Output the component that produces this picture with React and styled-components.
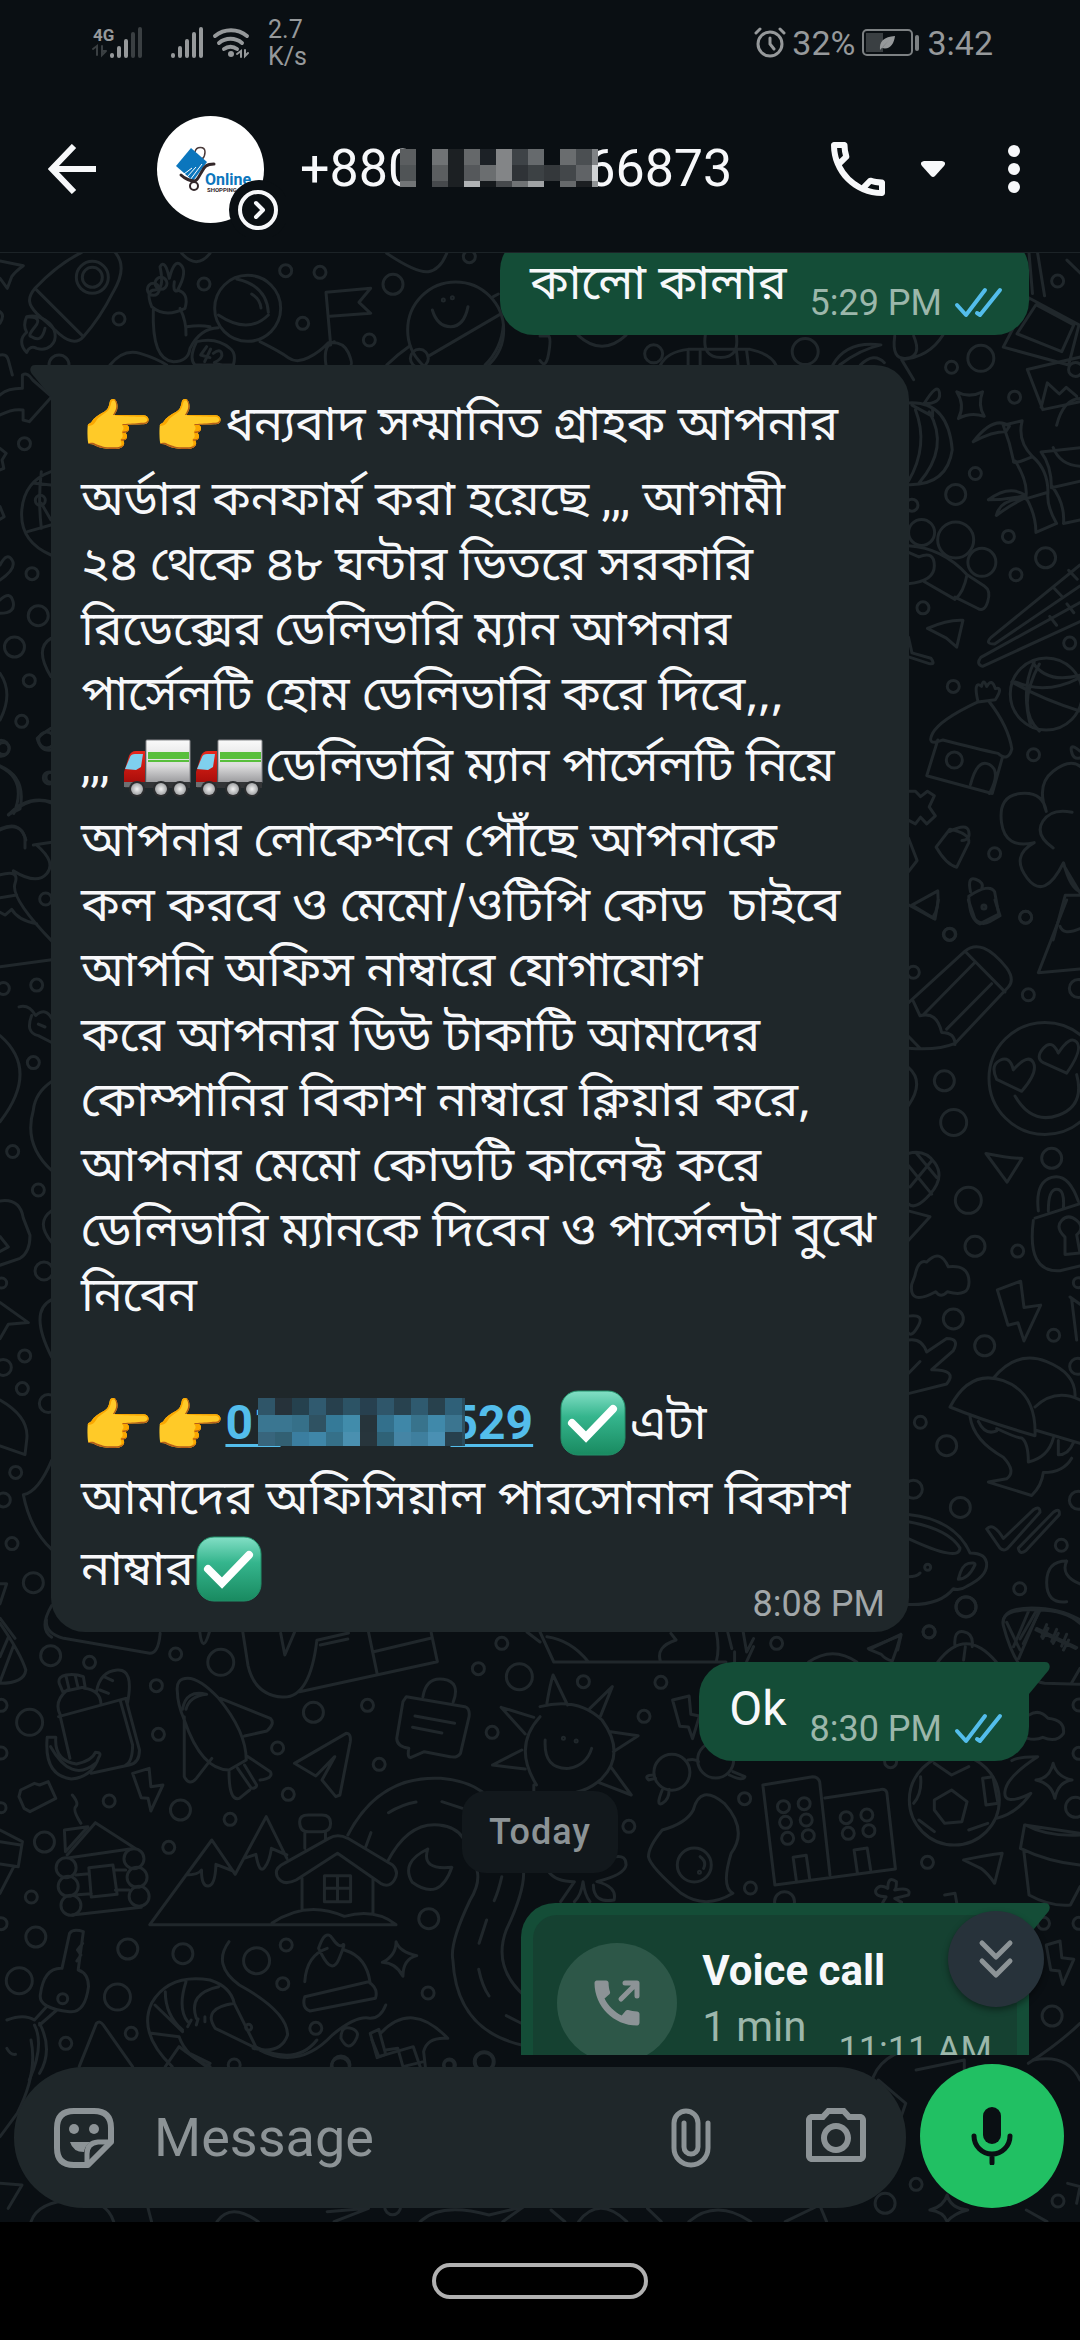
import React from 'react';
import styled, { createGlobalStyle } from 'styled-components';
import { MdOutlineCall, MdCall, MdOutlinePhotoCamera } from 'react-icons/md';

const c = {
  bg: '#0a0f13',
  doodle: '#20272b',
  line: '#1c2327',
  received: '#1f272a',
  sent: '#144d37',
  text: '#f7f8fa',
  muted: '#8c9396',
  status: '#96999b',
};
const bengali = '"Noto Sans Bengali UI", "Noto Sans", sans-serif';

const GlobalStyle = createGlobalStyle`
  * { box-sizing: border-box; }
  body { margin: 0; background: #000; color: ${c.text}; font-family: Roboto, "Noto Sans", sans-serif; }
  button { border: 0; padding: 0; background: none; color: inherit; font: inherit; display: flex; align-items: center; justify-content: center; }
  svg { display: block; flex: none; }
`;

const Screen = styled.div`
  display: flex;
  flex-direction: column;
  height: 100vh;
  background: ${c.bg};
`;

/* ---------- status bar ---------- */
const StatusBar = styled.div`
  display: flex;
  justify-content: space-between;
  align-items: center;
  height: 85px;
  padding: 0 87px 0 92px;
  color: ${c.status};
`;
const StatusGroup = styled.div`
  display: flex;
  align-items: center;
  gap: ${(p) => p.$gap}px;
`;
const NetSpeed = styled.span`
  width: 36px;
  margin-left: 8px;
  font-size: 25px;
  line-height: 27px;
`;
const StatusText = styled.span`
  font-size: 34px;
  line-height: 40px;
`;

const Signals = () => (
  <svg width="160" height="40" viewBox="0 -2 160 40" fill="none" stroke={c.status} strokeWidth="4" strokeLinecap="round">
    <text x="1" y="16" fontSize="17" fontWeight="700" fill={c.status} stroke="none" fontFamily="Roboto, sans-serif">4G</text>
    <g stroke="#3a3f42" strokeWidth="2">
      <path d="M1 24l4-3v9M10 21v9l4-4M14 26h-3" />
    </g>
    <path d="M20 30v1M27 23v8M34 16v15" />
    <path d="M41 9v22M48 4v27" stroke="#3a3f42" />
    <path d="M81 30v1M88 23v8M95 16v15M102 9v22M109 4v27" />
    <path d="M123 11a25 25 0 0 1 32 0M127 18a18 18 0 0 1 23 0M132 24a11 11 0 0 1 13 0" />
    <circle cx="139" cy="29" r="3" fill={c.status} stroke="none" />
    <path d="M145 29l4-3v6M153 25v6l3-3" strokeWidth="2" />
  </svg>
);
const Alarm = () => (
  <svg width="32" height="32" viewBox="0 0 32 32" fill="none" stroke={c.status} strokeWidth="3" strokeLinecap="round">
    <circle cx="16" cy="17" r="12" />
    <path d="M16 11v6l4 5M2 6l4-4M30 6l-4-4" />
  </svg>
);
const Battery = () => (
  <svg width="60" height="30" viewBox="0 0 60 30">
    <rect x="2" y="2" width="49" height="25" rx="4" fill="none" stroke="#7d8183" strokeWidth="2" />
    <rect x="5" y="5" width="17" height="19" fill="#3a3f42" />
    <path d="M19 22c-1-9 4-13 15-14-1 8-5 14-13 12l7-8-9 10z" fill={c.status} />
    <rect x="54" y="7" width="4" height="16" rx="2" fill="#7d8183" />
  </svg>
);

/* ---------- header ---------- */
const Header = styled.header`
  display: flex;
  align-items: center;
  height: 168px;
  padding: 0 60px 0 48px;
  border-bottom: 1px solid ${c.line};
`;
const AvatarBox = styled.div`
  position: relative;
  margin: 2px 36px 0 61px;
`;
const AvatarBadge = styled.div`
  position: absolute;
  right: -22px;
  bottom: -14px;
`;
const Name = styled.h1`
  flex: 1;
  margin: 0;
  font-size: 52px;
  line-height: 64px;
  font-weight: 400;
  white-space: nowrap;
`;
const CallButton = styled.button`
  gap: 27px;
`;
const MoreButton = styled.button`
  margin-left: 63px;
`;

const Avatar = () => (
  <svg width="107" height="107" viewBox="0 0 107 107" role="img" aria-label="Online Shopping">
    <defs><clipPath id="face"><circle cx="53.500" cy="53.500" r="53.500" /></clipPath></defs>
    <g clipPath="url(#face)">
      <rect width="107" height="107" fill="#fff" />
      <path d="M38 36c1-6 10-6 10 0s-2 6-4 8" fill="none" stroke="#4a3a3a" strokeWidth="1.500" />
      <path d="M34 32L50 46 36 65 19 50z" fill="#0b76bd" />
      <path d="M27 58l8-6M30 61l9-10M33 64l12-16" stroke="#fff" strokeWidth="1" />
      <path d="M57 48c-9 0-10 4-13 9s-4 8-7 8-9-2-13-6" fill="none" stroke="#33272a" strokeWidth="3" strokeLinecap="round" />
      <circle cx="37" cy="70" r="4" fill="none" stroke="#33272a" strokeWidth="2" />
      <text x="48" y="69" fontFamily="Roboto, sans-serif" fontSize="16" fontWeight="700" fill="#0b76bd">Online</text>
      <text x="50" y="76" fontFamily="Roboto, sans-serif" fontSize="6" fontWeight="700" fill="#33272a">SHOPPING</text>
    </g>
  </svg>
);

/* ---------- blurred digits ---------- */
const MosaicSvg = styled.svg`
  position: relative;
  display: inline-block;
  vertical-align: ${(p) => p.$drop}px;
  margin: 0 ${(p) => p.$right}px 0 ${(p) => p.$left}px;
`;
function Mosaic({ rows, cell, width, height, ...rest }) {
  return (
    <MosaicSvg width={width} height={height} viewBox={`0 0 ${width} ${height}`} shapeRendering="crispEdges" {...rest}>
      {rows.map((row, y) => row.split(' ').map((col, x) => (
        <rect key={`${x}-${y}`} x={x * cell} y={y * cell} width={cell} height={cell} fill={`#${col}`} />
      )))}
    </MosaicSvg>
  );
}
const nameMosaic = [
  '5b5e60 0a0f13 707375 1c2023 65686a 1c2126 838587 3e4347 666a6d 0a0f13 6a6d6f 4b4f52 808386',
  '505456 0a0f13 5b5e60 1c2023 55585b 6b6e70 838587 2f3337 3c4144 34383b 43474a 606366 d0d2d4',
  '727577 0a0f13 46494c 1c2023 b0b3b5 15191c 46494c 707375 a0a3a5 0a0f13 66696b 1c1f22 909395',
];
const linkMosaic = [
  '2f5568 26323a 25414e 305a6f 27404d 2c5365 27404f 2f566a 28424f 2f5a6f 28414d 2f6078 2a4c5d',
  '3a7691 3a7691 367089 2f5262 357a98 418cab 26343b 33708c 3f87a8 38738c 4089aa 3b7590 2f5262',
  '38657c 326073 3b7ea0 3f86a8 357089 4a90b0 27353c 2f6277 4585a5 3f7f9e 4a90b3 27404d 2a4c5d',
];

/* ---------- chat ---------- */
const Chat = styled.main`
  position: relative;
  display: flex;
  flex-direction: column;
  flex: 1;
  min-height: 0;
`;
const Wallpaper = styled.svg`
  position: absolute;
  inset: 0;
  width: 100%;
  height: 100%;
`;
const Viewport = styled.div`
  position: relative;
  flex: 1;
  min-height: 0;
  overflow: hidden;
`;
const Messages = styled.div`
  display: flex;
  flex-direction: column;
  gap: 30px;
  margin-top: -17px;
  padding: 0 51px;
`;
const Bubble = styled.div`
  position: relative;
  display: flex;
  align-self: ${(p) => (p.$sent ? 'flex-end' : 'flex-start')};
  background: ${(p) => (p.$sent ? c.sent : c.received)};
  border-radius: 34px;
  border-top-right-radius: ${(p) => (p.$sent && p.$tail ? 0 : 34)}px;
  border-top-left-radius: ${(p) => (!p.$sent && p.$tail ? 0 : 34)}px;
`;
const ShortBubble = styled(Bubble)`
  align-items: flex-end;
  gap: 23px;
  padding: 12px 26px 10px 30px;
`;
const LongBubble = styled(Bubble)`
  flex-direction: column;
  min-width: 858px;
  padding: 18px 24px 6px 30px;
`;
const CallBubble = styled(Bubble)`
  padding: 12px;
`;
const TailSvg = styled.svg`
  position: absolute;
  top: 0;
  left: ${(p) => (p.$sent ? '100%' : '-21px')};
  transform: ${(p) => (p.$sent ? 'scaleX(-1)' : 'none')};
`;
const Tail = ({ sent }) => (
  <TailSvg $sent={sent} width="21" height="32" viewBox="0 0 21 32" fill={sent ? c.sent : c.received}>
    <path d="M21 0H5C0 0-1 5 2 9l19 23z" />
  </TailSvg>
);

/* The outer block's font sets one baseline for every line; runs only pick glyphs. */
const Run = styled.span`
  font-family: ${(p) => (p.$latin ? 'Roboto, sans-serif' : bengali)};
  line-height: 0;
`;
const Text = styled.div`
  height: 65px;
  margin-bottom: 12px;
  font-family: "Noto Sans", sans-serif;
  font-size: 48px;
  line-height: 65px;
`;
const Body = styled.div`
  font-family: "Noto Sans", sans-serif;
  font-size: 48px;
  line-height: 65px;
  white-space: pre;
`;
const LineBox = styled.div`
  height: ${(p) => (p.$emoji ? 81 : 65)}px;
  padding-top: ${(p) => (p.$emoji ? 6 : 0)}px;
`;
const Line = ({ emoji, children }) => <LineBox $emoji={emoji}><Run>{children}</Run></LineBox>;
const BlankLine = styled.div`
  height: 57px;
`;
const EmojiText = styled.span`
  font-family: "Noto Color Emoji", sans-serif;
  font-size: 58px;
  line-height: 0;
  vertical-align: -7px;
`;
const EmojiSvg = styled.svg`
  display: inline-block;
  vertical-align: -14px;
  margin-bottom: -3px;
`;
const PhoneLink = styled.a`
  color: #53bdeb;
  font-family: Roboto, sans-serif;
  font-weight: 700;
  text-decoration-thickness: 3px;
  text-underline-offset: 5px;
`;
const Time = styled.span`
  color: ${(p) => (p.$sent ? '#9cb7ab' : '#a2a7a9')};
  font-size: 36px;
  line-height: 44px;
  white-space: nowrap;
`;
const LongTime = styled(Time)`
  align-self: flex-end;
  margin-top: -27px;
`;
const Stamp = styled.span`
  display: flex;
  align-items: center;
  gap: 12px;
`;
const DayPill = styled.div`
  align-self: center;
  padding: 19px 27px;
  border-radius: 24px;
  background: #12181c;
  color: ${c.muted};
  font-size: 36px;
  line-height: 44px;
  font-weight: 500;
  letter-spacing: 1px;
`;
const CallCard = styled.div`
  display: flex;
  gap: 25px;
  padding: 28px 25px 28px 24px;
  border-radius: 24px;
  background: #154131;
`;
const CallDisc = styled.div`
  display: flex;
  align-items: center;
  justify-content: center;
  width: 120px;
  height: 120px;
  border-radius: 50%;
  background: #2d5748;
`;
const CallInfo = styled.div`
  display: grid;
  grid-template-columns: auto auto;
  column-gap: 32px;
  font-size: 42px;
  line-height: 56px;
`;
const CallTitle = styled.strong`
  grid-column: 1 / -1;
`;
const CallLength = styled.span`
  color: #9cb7ab;
`;
const CallTime = styled(Time)`
  margin-top: 29px;
`;
const ScrollDown = styled.button`
  position: absolute;
  right: 36px;
  bottom: 48px;
  width: 96px;
  height: 96px;
  border-radius: 50%;
  background: #27323a;
  box-shadow: 0 3px 6px rgba(0, 0, 0, 0.4);
`;

const Ticks = () => (
  <svg width="49" height="32" viewBox="0 0 49 32" fill="none" stroke="#53bdeb" strokeWidth="4" strokeLinecap="round" strokeLinejoin="round" role="img" aria-label="Read">
    <path d="M3 18l9 10L31 3M23 26l3 2L46 3" />
  </svg>
);

const Truck = () => (
  <EmojiSvg width="72" height="66" viewBox="0 0 72 66" role="img" aria-label="truck">
    <defs>
      <linearGradient id="box" x1="0" y1="0" x2="0" y2="1"><stop offset="0" stopColor="#fafafa" /><stop offset="0.600" stopColor="#dcdcdd" /><stop offset="1" stopColor="#98989b" /></linearGradient>
      <linearGradient id="cab" x1="0" y1="0" x2="0" y2="1"><stop offset="0" stopColor="#e9271b" /><stop offset="1" stopColor="#a80d0a" /></linearGradient>
      <radialGradient id="hub"><stop offset="0" stopColor="#f2f2f2" /><stop offset="1" stopColor="#a3a5a7" /></radialGradient>
    </defs>
    <rect x="24" y="8" width="44" height="43" rx="1" fill="url(#box)" stroke="#88898c" />
    <rect x="26" y="20" width="41" height="7" fill="#58bf3c" />
    <rect x="26" y="28" width="41" height="2" fill="#58bf3c" />
    <path d="M7 24q2-5 7-5h9v32H2V40z" fill="url(#cab)" />
    <path d="M8 25q1-3 5-3h8l-2 13-5 3-11-1z" fill="#7fd0ee" />
    <rect x="3" y="50" width="65" height="6" fill="#333537" />
    <rect x="2" y="50" width="9" height="5" fill="#6d7073" />
    {[15, 39, 58].map((x) => (
      <g key={x}><circle cx={x} cy="57" r="8" fill="#2b2d2f" /><circle cx={x} cy="57" r="6" fill="url(#hub)" /></g>
    ))}
  </EmojiSvg>
);
const Check = () => (
  <EmojiSvg width="72" height="66" viewBox="0 0 72 66" role="img" aria-label="check mark">
    <defs>
      <linearGradient id="tick" x1="0" y1="0" x2="0" y2="1"><stop offset="0" stopColor="#83dfc6" /><stop offset="0.400" stopColor="#35b58d" /><stop offset="1" stopColor="#198a60" /></linearGradient>
    </defs>
    <rect x="3" y="1" width="64" height="64" rx="17" fill="url(#tick)" stroke="#23916a" />
    <path d="M14 33l14 14L55 19" fill="none" stroke="#fff" strokeWidth="8" strokeLinecap="round" strokeLinejoin="miter" />
  </EmojiSvg>
);
const Hands = () => <EmojiText>👉👉</EmojiText>;

/* ---------- wallpaper doodles ---------- */
const patches = [
  {
    at: [0, 245], scale: [1 / 3, 1 / 3],
    paths: [
      'M245 22Q170 60 105 130C80 160 85 180 110 205L165 255Q220 310 250 275Q300 220 340 140C370 90 370 50 345 22M105 130L250 275',
      'M0 48L70 62Q45 80 35 95L22 130 0 100M0 200q15 10 0 35M0 330q20-5 25 15l12 45',
      'M80 215c40-10 80 20 85 50s-20 55-55 45q-20-10-30 12c-20-20-20-45 0-60q-12-20 0-47q50 0 25 30t-10 30q30 20 40-25',
      'M455 185q-20-50 10-50t15-70q15-25 28 35q15-60 35-40t-10 75q35 10 22 55q-60 30-100-5M460 195q-5 150 60 155q45 0 50-40q30-60 85-62M540 190q20 40 18 80M560 245q40-5 70 0M523 110q-5 30 8 28',
      'M655 210q90 60 150 0M710 102q90 20 95 100M755 147q25 15 28 42M590 290q60-15 100 20q20 15 10 50H585q-20-20 5-70z',
      'M620 305l-18 25 28 8M632 312l-18 38M640 325q20-15 25 0t-22 28l24 8',
      'M780 290q60 30 85 48t60 0t60-45q45-5 60 30t6 40M978 360q-10-60 25-70M992 300L978 142 1112 130 1077 172 1112 205 990 214M330 360q40-50 90-35t80 35',
      'M1160 25q90 60 125 55t55-55M545 25q45 50 85 0',
      'M1297 195q15 50 55 50t52-60M1160 360q30-30 70-58M1288 332L1500 208M1480 155l15-8M1455 360q50-50 55-120',
    ],
    dots: [[277, 97, 16], [277, 97, 10], [357, 222, 6], [177, 360, 10], [612, 117, 6], [743, 190, 33], [857, 77, 6], [960, 82, 6], [908, 235, 6], [1179, 118, 10], [1108, 285, 6], [1408, 35, 6], [1258, 340, 9], [1367, 255, 48], [460, 133, 6], [483, 115, 6], [1330, 165, 1], [1357, 158, 1]],
  },
  {
    at: [540, 240], scale: [0.3444, 0.4464],
    paths: [
      'M0 215h25q8 5 0 40t-25 15M110 213q70 50 140 0M350 280q20-30 80-35h180q60 10 75 35M430 250v30M465 250v30M570 245l5 35M600 248l5 30M480 213q-10 50 45 50t45-50',
      'M850 280q40-55 140-45-60 10-120 45M930 280q40-30 70-5M1030 215q-10 55 35 50t20-50M1170 213q-40 50-120 55l35 45',
      'M1420 130l145 60-30 90-190-40 75-110M1440 145l110 45-35 60-130-40zM1420 30l10 90M1445 30l20 95M1530 45l40 30M1415 290l155-28M1415 290l45 90 110-18M1455 375l18-55 35 25 20-15 30 20M1500 415q20-60 70-60',
      'M1210 340q35 15 75 0-15 30 5 55-40-10-75 5 20-30-5-60zM1070 365q115-5 127 105-15 80-127 78M1090 380q40 80-20 160M1130 385q60 80-30 160M1080 370l60 25v-18l-25-10q40-50 45-25t-45 25',
      'M1258 452q60-60 105-35l-10 12q-40 0-95 23M1345 415l55-10q-15 45 30 80-60 20-55 10-10-40-30-80M1380 495q40 50 30 85l65-15q0-50-45-80M1410 575q30 40 30 80l60-20q-30-40-25-70M1455 475l115-10M1455 475q30 30 30 80l85-15M1485 550q40 40 35 85l48-8M1302 582q60-35 108-10-50 10-108 10M1325 617q10-35 80-38-40 15-80 38M1490 465q20 40 80 42',
      'M1070 685q100 5 170 65-10 40-35 55l-90-40M1240 750l50 25q20 10 10 35t-30 15l-65-25M1070 770q75-5 75-40t-45-20l-30-10',
      'M1125 870q60-20 103-18l-18 60-30-20zM1568 728L1310 890q-20 15 10 15L1568 775M1568 812L1280 935q-15 15 5 20L1568 855M1490 778l25 20M1535 740l25 20M1480 843l20 20M1530 815l20 20M1070 890l10 35 55 12q15 15-5 12l-60-15',
      'M1270 1035q-110 40-130 70t30 15q100 20 160 30 30 20 40-10-10-50-65-105M1155 1120l-32 80 190 40 30-82M1250 1220q20-60 55-45t0 65M1272 1035q-15-50 10-35 5-20 15 0 15-20 25 5 25-5 0 25z',
      'M1380 990q90 30 188-10M1370 990q90 40 198 65M1435 945q-40 60-10 145M1430 945q40 50 138 30M1450 950q-70 100 0 150M1568 1145q-30-20-25 0t25 15',
      'M1070 1235h20l15 12 20-12 20 10-15 25 18 20-25 18-18-15-15 15-25-10',
      'M1150 1360l40-40q60 10 55 30l-35 55q-30-5-60-45zM1190 1325q50-20 55 0t-20 20M1245 1470q60-30 75-10l12 50-55 22q-30-10-32-62zM1250 1460q-10-35 15-28t18 20M1080 1490l75-32q5 40-15 60zM1070 1340l25 50-25 25',
      'M1470 1280q-10-45-75-40t-55 65 95 45q-70 30-20 80t105-35q20 60 50 65M1470 1280q-30-60 20-90t80-10M1545 1282q-60-10-85 20t30 60M1520 1400l50 65M1490 1568l35-100h45',
    ],
    dots: [[770, 250, 13], [1195, 285, 6], [1280, 265, 13], [1503, 92, 6], [1378, 352, 6], [1264, 523, 6], [1207, 570, 10], [1108, 655, 13], [1207, 672, 18], [1283, 722, 14], [1360, 664, 6], [1468, 712, 10], [1382, 750, 6], [1112, 824, 6], [1538, 903, 6], [1200, 1000, 6], [1470, 1017, 36], [1203, 1165, 8], [1433, 1153, 6], [1320, 1375, 6], [1410, 1517, 6], [1190, 1555, 6], [1289, 1494, 2], [1555, 290, 7], [330, 255, 9], [1080, 594, 6]],
  },
  {
    at: [700, 900], scale: [1 / 3, 0.4783],
    paths: [
      'M625 215l170-108q50-30 125 35 25 25 5 40L765 300q-50 15-140 10M795 107l120 85M640 212l20 30q50-10 65 35 40 0 40 25M670 240l155-110M740 270l135-95M625 285l35 25M625 10l80 30 10-40M805 0l20 40q20 15 45 5l30-12-15-33M1100 0l-85 152 125-8M1080 55q10 20 60 5',
      'M940 355q-10-30-40-20t-10 40l75 25q50-40 35-60t-60 15zM1075 320q-20-30-45-10t0 30l70 22q50-50 30-65t-55 23zM945 410q50 60 130 40t55-85',
      'M625 350q50 30 0 80M858 530q70 10 108 10l-45 50zM1015 650q-10-60 40-70t80 50M1045 650q0-45 25-45t20 40M1005 665l135-30M1000 670q-20 110 80 105l60-10M1095 705q-30-20-10-35t45 0 0 30l10 38-45 3zM625 530q50-10 80 20t-15 65-65 20M650 530l60 50M625 555l70 60M630 600l65-55M625 650l65 12-65 50',
      'M645 785q10-35 35-28 40-30 65 10 60-5 62 30t-65 22q-20 15-35 0-80 30-72-15zM892 815l70-18 10 55 50-5-50 75-18-38-30 5zM1110 830l30 15M1115 835l15 85',
      'M625 870q50-5 30 20t-30 15M625 920q40-5 55 25l60-28q40 0 20 25l-65 40q80 0 45 30l-115 20M625 990l35-25',
      'M750 1060q60-80 160-55t95 115q-150-30-255-60zM880 1000q70-60 160-35t85 75M1005 1060q60-40 135-15M1005 1108l135 28M810 1080q10 50 100 85 40 30 10 45l-55 7 130 28q30-20 35-48 60 0 85-30M835 1090q20 30 55 20M890 1105q60 20 75 20 20 10 20 50 60-10 75-50M1075 1130v30q30 0 45-25',
      'M860 1315q20-15 50 20l90-60q20-10 20 5l-90 70q-15 15-30 5zM955 1355l105-75q20-10 18 5l-100 75q-20 10-23-5zM625 1285q140 10 185 80 50 0 50 25t-60 45q-20 10-40 5-40 35-135 33M625 1300q120 15 155 55 0 30-155-20M775 1420q10-30 30-33t20 3q-20 30-50 30zM625 1415q25 0 35-8',
      'M1100 1382q-60 0-60 45t60 40M1100 1382q-20 30 40 48M910 1510q0-30 85-30t145 25M920 1510l40 58M1010 1485l-50 60M1020 1485l-50 70M1010 1523l120 40M1040 1515l-15 25M1070 1525l-15 25M1100 1535l-15 25M505 1565l98-28-10 31',
    ],
    dots: [[748, 72, 6], [977, 36, 6], [985, 198, 6], [1135, 185, 9], [733, 378, 10], [761, 465, 13], [1035, 373, 56], [1055, 540, 10], [805, 628, 13], [825, 724, 10], [953, 734, 6], [760, 876, 10], [854, 932, 10], [1061, 910, 6], [661, 1092, 6], [740, 1141, 10], [640, 1232, 9], [781, 1270, 10], [1084, 1349, 6], [1135, 1255, 9], [683, 1395, 3], [959, 1440, 6], [798, 1478, 10], [687, 1530, 6], [1133, 975, 8], [1135, 800, 5], [640, 151, 6]],
  },
  {
    at: [0, 1620], scale: [0.3444, 1 / 3],
    paths: [
      'M135 0q-5 40 50 55l250 45q25 0 30-60M0 10q60 90 75 140-5 40-75 40M25 50L0 110M40 75L0 185M580 36q8 70 28 0M705 36l15 100q20 90 100 95t100-170l92-22M870 215l400-90-18-87M1070 36l25 125M1085 95l165-40M815 40l12 65 28-68M930 75l80-18M1530 36l38 30',
      'M172 190q-5-20 20-25t50 5l5 30-65 15zM192 170l8 35M218 165l8 35M175 285q-20-40 20-75M245 205q45 5 48 45M280 215q10-60 60-65t30 100M170 290l195-55 40 155q0 40-30 45l-110 25M175 290l28 125M350 245l35 130q0 50-20 60M302 170l25 12M290 210l25 10M137 352h25q-5 70 60 80 45-10 55-35 20 0 10 15-20 60-80 65-80-10-70-125M147 380q60 110 130 50',
      'M515 215q-5-40 30-40t90 60q80 100 80 185l-50 30q-80 0-130-150-20-50-20-85zM530 268q10-60 70-45-50 5-60 45M640 235l145 60q15 15-10 38l-65 15M535 290v180q15 30 35 5l45-60M720 410l65 45q10 20-30 25M665 455q0 90 30 80l30-25M690 445l40 60q15 0 15-10l-35-60',
      'M855 430l150-90q15 0 12 25l-30 160-12 5-40-50 37-70-55 58zM1180 230l170 30q15 5 12 30l-25 110q-10 15-30 10l-75-15-40 18q-10 0-5-28-35-5-35-30l18-110zM1205 288l115 22M1198 322l85 17M1228 230q10-60 60-52t28 68M1455 262l95 30M1455 262l70 80M1430 435l85-45M1430 435l95 12M1568 290q-80 90-10 205M1550 495v20',
      'M55 530l5-20 40-20 15 5 25-10 22 50-75 40-17-10zM385 460l48-15 5 55 35-5-35 78-8-38-20-2zM210 525q20 25 10 35t15 50M187 630l68-10-65 75zM195 705l82-97 115 77-190 28M0 630l65 35-12 75-53-8M40 740L0 820M0 665l60 10M258 743l70-8 12 88-75 8zM220 765l38-4M335 750h30M225 824l40-3M335 810h40M210 885l200-23',
      'M435 914h715q-60-50-150-25-110-50-210 20M435 914l180-254 68 103 90-173 60 125M540 765q35 0 45-15 0 50 20 48t22-65l50 20M708 715l35-12q10 60 25 40t20-58l45 20M805 770q-10-25 20-40l130-75q25-15 55 0l130 80q20 20 5 45t-40 10L980 700l-120 80q-40 20-55-10zM877 775v95M1083 775v105M885 640v45M945 635v25M870 605q0-20 25-20h40q25 0 25 25t-25 25h-40q-25 0-25-30zM942 767h76v78h-76zM980 767v78M942 805h76',
      'M1010 645q90-180 270-170 70 5 120 40M1125 725q60-120 150-110 50 5 70 40M1128 578q40-25 80-32M1283 545l60 20M1062 680l15-42M1242 687q-80 40-45 100 80 60 115-45-90 10-70-55M1385 750q10 40-20 90-60 130-50 180 10 210 200 255M1520 750q5 60-50 180-40 110 50 195M1457 770q-10 45-22 72M1413 900l-22 70M1390 1048q10 50 30 80M1470 1187l42 22',
      'M180 1045l22-105q10-15 40-5l-15 115q30 10 30 50-10 80-55 75-90-10-85-50 10-80 60-80M240 970l-15 20 10 15-12 18M135 1160l-35 40M165 1170l-50 45M100 1200q-30-20-80 0M100 1215q30 60-15 165M115 1210q40 80 0 150M230 1340l50-130q10-10 20 5l85 125M20 1285q10 20 25 18',
      'M500 1340q-100-100-60-190 50-90 170-70 60 20 70 70l65 135-120-60q-40-60 55-75M480 1115q0 70 50 115M540 1085q-25 80 5 120M635 1100q-90 20-65 95M450 1155l80 80M440 1240l80 10q20 60 90 90M540 1295l70 35M545 1220l10-20M570 1215l5-18M595 1205v-15M665 965q-50 70 30 130 140 80 140 150-20 60-100 40M745 1285q120 70 220-40 70-60 110-50 30 0 45-40M990 1255q0-40 30-30t10 40-40-10',
      'M885 1085q5-80 65-100M1000 990q65 20 75 100M885 1130l185-45q30 20 20 50l-190 38q-25-10-15-43zM925 985q20-60 40-30t30 20-10 40-50-10zM1150 965q10 30 60 42-40 10-40 62-20-40-60-42 40-20 40-62zM1075 1240l25-12 20 75-25 10zM1105 1240q90-100 195 15-60-5-70 40l5 45M1120 1290l35-5 15 55M1170 1340l60-15',
    ],
    dots: [[147, 107, 10], [260, 127, 6], [510, 102, 6], [641, 127, 13], [86, 307, 13], [454, 197, 6], [460, 343, 6], [910, 277, 10], [1067, 256, 6], [806, 384, 6], [1101, 433, 6], [837, 523, 6], [1429, 337, 6], [1457, 70, 6], [1389, 146, 6], [1508, 170, 13], [317, 543, 6], [524, 570, 10], [668, 598, 6], [490, 682, 6], [129, 666, 10], [91, 831, 6], [192, 743, 10], [198, 799, 10], [206, 856, 10], [389, 716, 10], [398, 772, 10], [404, 829, 10], [104, 951, 10], [371, 987, 10], [531, 1001, 10], [56, 1082, 13], [341, 1131, 13], [745, 1022, 13], [831, 975, 6], [821, 1091, 6], [1245, 896, 10], [1243, 1119, 6], [917, 1225, 6], [191, 1270, 6], [381, 1240, 6], [182, 1136, 5], [1406, 1325, 10], [722, 1222, 3], [3, 399, 6], [3, 256, 6], [3, 911, 6], [3, 563, 5], [988, 1340, 9], [680, 1335, 6], [1305, 1335, 6]],
  },
  {
    at: [540, 1600], scale: [0.3444, 1 / 3],
    paths: [
      'M0 96l40 90h500M20 110q70 10 120 75M380 100l15 20q-60 20-45 65M512 96q10 50 0 88M545 96l12 50M590 96l10 60 20-40M620 140l-20 45M565 155v30M780 186q70-50 140 0M1048 103q-10 40-25 80-20-5-32-20l-35-15 92-45M1155 186q80-110 170 0M1205 140q-5-50 25-45t25 45M1235 140l-5 40M1345 75q-10-50 100-45 80 0 123 40M1345 75q40 160 120 175l103 3M1420 30l-45 110M1450 30l-60 145M1440 90l115 55M1475 85l-15 30M1505 100l-15 30M1535 120l-15 30M1568 205l-25 45',
      'M20 310q10-60 18-85l42 90M145 325l65-65-35 90M205 395l80 12-72 48M205 500l60 85-95-38M15 420q-5 90 70 85 50-10 65-60M0 320q110-30 180 40 70 100 0 175-60 60-170 45M385 300l48-12 5 55 25 5-20 68-12-35-25-2zM330 525q-30 0-15 15l20-5M355 570q-20 50 0 40t20-42M430 480q20-5 30 5M550 525q40 20 45 5l-35-15',
      'M445 630q20-80 90-20 70 80 20 150-30 100 5 120-80 50-150 0-90-80-95-110 0-30 40-80 70-20 90-60zM465 770q20 15 10 35M647 555l145-25q15 0 20 15l30 280M647 555l35 300 350-48-25-230q-5-12-20-8l-160 25M735 772l38-6 10 70M735 772l10 75M912 750l38-6 10 65M912 750l10 72',
      'M1145 600l50-30 45 35-15 60-50 5-30-40zM1145 490l50 35 50-25M1105 530q5 50-20 80M1285 535l30-5 15 80-35 5zM1100 660l45 35M1245 690l55-20M1325 655q60-15 100-75-80 40-75-5t95-105q-60 0-75 12M1440 540q40-5 50-50 10 40 55 50-40 5-50 55-10-45-55-55zM1420 345q30-20 55 10 50 5 45 45-20 30-60 12-20 10-45 3M1395 745l12-70 160 25M1395 745q80 40 172 50M1405 755l15 130q60 35 120 30l28-55M1410 675q60 35 158 30M1230 780q70-15 112-20l-22 90q-20-30-40-45z',
      'M975 870q10-20 35-5 0-40 25-20 0 20-5 25 50-10 40 15l-40 10 20 12M975 870q-5 20 30 20l-10 18M1175 885l30-5 5 28M25 815q20 30 75 30l-40 60M100 905q20-20 25-60 5 40 20 60M155 855q0 55 60 45 10-40-50-55 80-20 85-50 0-30-30-25M1470 1035l40-12 5 50 35 5-32 75-10-40-25-3zM1568 1270q-60 60-150 120',
    ],
    dots: [[126, 245, 6], [351, 247, 6], [302, 349, 6], [594, 596, 6], [258, 679, 6], [611, 864, 6], [687, 130, 6], [1130, 96, 6], [1237, 20, 10], [383, 517, 18], [510, 480, 18], [448, 795, 17], [1203, 600, 45], [1125, 787, 6], [1462, 970, 6], [1487, 1248, 10], [68, 415, 1], [105, 423, 1], [463, 817, 1], [1018, 485, 6], [1555, 622, 10], [1565, 460, 6], [707, 620, 6], [767, 611, 6], [713, 667, 6], [773, 660, 6], [719, 715, 6], [779, 707, 6], [889, 653, 6], [949, 645, 6], [895, 700, 6], [955, 692, 6], [1565, 315, 6], [1565, 970, 6], [710, 905, 10]],
  },
  {
    at: [0, 740], scale: [1 / 3, 0.574],
    paths: [
      'M0 45q80 20 60 75l-35 10q70-35 130-20M0 155q60-15 75 15v18M100 183l55-5M0 235q60-10 45 15t110 100M110 183q60 30 30 50t-100-5M0 275l50-5M0 300l15 5 20-10q20 20 75 25M0 395l155-12M57 465q30-5 50 15 30-15 48 5M95 480q-20 30 20 35l40 12M115 495l20 5M0 515q120 60 0 150M155 595q-50 20-55 50-30 60 55 105M155 820q-50 20 0 55',
      'M0 803q60-5 70 30l20 30q0 30-30 40l-60 12M0 865l25 18-25 8M0 980l85 35-60 3-25 25M0 1150q90 30 80 70l-5 25-75-15M155 975q-70 20 0 100M155 1255q-40 55-85 60 20 60 85 95M155 1508q-40 40 0 55M0 1470h20l-20 35M0 1530l45 35',
    ],
    dots: [[140, 0, 8], [10, 15, 6], [148, 66, 6], [137, 277, 6], [110, 427, 6], [10, 433, 6], [100, 562, 6], [38, 717, 6], [115, 784, 6], [132, 925, 9], [5, 946, 5], [74, 1073, 6], [10, 1093, 8], [67, 1130, 6], [145, 1156, 9], [47, 1276, 6], [10, 1324, 7], [36, 1400, 6], [100, 1468, 10]],
  },
  {
    at: [0, 340], scale: [0.3444, 1 / 3],
    paths: [
      'M0 165q20-20 65-20v-40q15-10 30 15l55 50-65 75-18-5v-30q-30-5-67 15M0 325l18 15-12 20 5 25-11 5M0 500l12 30-12 8M0 675q20-40 35-15t-35 60M0 780q30-30 38 5t-38 35M148 395q-80 30-85 120t85 130M120 395q-10 80 0 170M80 575l68-20M100 430l48 5M120 490l28 50M148 895q-50 30 0 115M0 1000q40 60 0 140M148 1165q-30 20-40 30 10 40 40 35M0 1280q80 40 40 140M25 1425q50-60 123-40M0 1470q60-30 75 30',
    ],
    dots: [[71, 311, 6], [93, 701, 6], [111, 827, 10], [42, 921, 10], [85, 1022, 6], [63, 1144, 6], [117, 481, 5], [3, 1225, 8], [148, 1312, 5]],
  },
  {
    at: [0, 2040], scale: [0.6888, 1 / 3],
    paths: [
      'M45 0q10 100-20 220L0 290M0 430l32 5-20 70M45 545q10-60 60-65t60 65M215 505l5 40M315 545q20-60 60 0M475 515l60-10-50 40M610 545q30-60 100-20l50-25-30 45M800 510l20 35M840 545q30-80 70 0M940 505l20 40M1000 545q40-70 90 0M1140 545l50-50 10 50M240 80l20-60 40 60M370 20q60 60 90-20M540 0l10 50 50-30 10 60M1265 130q10-90 70-110M1275 120l40 70-10 60M1330 90l70-30v60M1500 60q50-20 68 60M1550 430l18 10-5 50M1350 510q20-10 25-45 5 40 30 45-20 10-30 35-5-30-25-35M1490 510l30 35',
    ],
    dots: [[70, 290, 9], [1330, 433, 6], [1285, 490, 10], [1536, 483, 6], [495, 75, 9], [703, 65, 9], [570, 500, 8], [652, 75, 5]],
  },
];
const Doodles = () => (
  <Wallpaper viewBox="0 253 1080 1969" preserveAspectRatio="xMidYMin slice" fill="none" stroke={c.doodle} strokeWidth="3" strokeLinejoin="round" strokeLinecap="round" aria-hidden="true">
    {patches.map(({ at, scale, paths, dots }, i) => (
      <React.Fragment key={i}>
        <g transform={`translate(${at[0]} ${at[1]}) scale(${scale[0]} ${scale[1]})`}>
          {paths.map((d) => <path key={d} d={d} vectorEffect="non-scaling-stroke" />)}
        </g>
        {dots.map(([x, y, r]) => <circle key={`${x},${y},${r}`} cx={at[0] + x * scale[0]} cy={at[1] + y * scale[1]} r={r} />)}
      </React.Fragment>
    ))}
  </Wallpaper>
);

/* ---------- composer ---------- */
const Composer = styled.form`
  position: relative;
  display: flex;
  align-items: flex-end;
  gap: 14px;
  padding: 9px 16px 14px 14px;
`;
const Field = styled.div`
  display: flex;
  align-items: center;
  flex: 1;
  min-width: 0;
  height: 141px;
  padding: 0 34px 0 40px;
  border-radius: 70px;
  background: ${c.received};
  color: ${c.muted};
`;
const MessageInput = styled.input`
  flex: 1;
  min-width: 0;
  margin: 0 40px;
  padding: 0;
  border: 0;
  outline: 0;
  background: none;
  color: ${c.text};
  font: 400 54px/64px Roboto, sans-serif;
  &::placeholder { color: ${c.muted}; opacity: 1; }
`;
const FieldButtons = styled.div`
  display: flex;
  align-items: center;
  gap: 89px;
`;
const MicButton = styled.button`
  width: 144px;
  height: 144px;
  border-radius: 50%;
  background: #21c063;
  color: ${c.bg};
`;

/* ---------- gesture bar ---------- */
const NavBar = styled.nav`
  display: flex;
  justify-content: center;
  align-items: center;
  height: 118px;
  background: #000;
`;
const HomePill = styled.button`
  width: 216px;
  height: 36px;
  border: 4px solid #b1b1b1;
  border-radius: 18px;
`;

export default function App() {
  return (
    <Screen>
      <GlobalStyle />
      <StatusBar>
        <StatusGroup $gap={8}>
          <Signals />
          <NetSpeed>2.7 K/s</NetSpeed>
        </StatusGroup>
        <StatusGroup $gap={6}>
          <Alarm />
          <StatusText>32%</StatusText>
          <Battery />
          <StatusText>3:42</StatusText>
        </StatusGroup>
      </StatusBar>

      <Header>
        <button type="button" aria-label="Back">
          <svg width="48" height="50" viewBox="0 0 48 50" fill="none" stroke={c.text} strokeWidth="6">
            <path d="M48 25H4M26 2L4 25l22 23" />
          </svg>
        </button>
        <AvatarBox>
          <Avatar />
          <AvatarBadge>
            <svg width="64" height="64" viewBox="0 0 64 64" fill="none" stroke={c.text} strokeWidth="4" strokeLinecap="round" strokeLinejoin="round">
              <circle cx="37" cy="37" r="30" fill={c.bg} stroke="none" />
              <circle cx="36" cy="37" r="18" />
              <path d="M34 30l7 7-7 7" />
            </svg>
          </AvatarBadge>
        </AvatarBox>
        <Name>
          +880
          <Mosaic rows={nameMosaic} cell={16} width={198} height={38} $drop={-1} $left={-17} $right={-12} />
          66873
        </Name>
        <CallButton type="button" aria-label="Call options">
          <MdOutlineCall size={72} />
          <svg width="24" height="16" viewBox="0 0 24 16" fill={c.text}>
            <path d="M3 0h18q5 1 2 5l-9 10q-2 2-4 0L1 5Q-2 1 3 0z" />
          </svg>
        </CallButton>
        <MoreButton type="button" aria-label="More">
          <svg width="12" height="50" viewBox="0 0 12 50" fill={c.text}>
            <circle cx="6" cy="7" r="6" /><circle cx="6" cy="25" r="6" /><circle cx="6" cy="43" r="6" />
          </svg>
        </MoreButton>
      </Header>

      <Chat>
        <Doodles />
        <Viewport>
          <Messages>
            <ShortBubble $sent>
              <Text><Run>কালো কালার</Run></Text>
              <Stamp><Time $sent>5:29 PM</Time><Ticks /></Stamp>
            </ShortBubble>

            <LongBubble $tail>
              <Tail />
              <Body>
                <Line emoji><Hands />ধন্যবাদ সম্মানিত গ্রাহক আপনার</Line>
                <Line>অর্ডার কনফার্ম করা হয়েছে <Run $latin>,,,</Run> আগামী</Line>
                <Line>২৪ থেকে ৪৮ ঘন্টার ভিতরে সরকারি</Line>
                <Line>রিডেক্সের ডেলিভারি ম্যান আপনার</Line>
                <Line>পার্সেলটি হোম ডেলিভারি করে দিবে,,,</Line>
                <Line emoji><Run $latin>,,,</Run> <Truck /><Truck />ডেলিভারি ম্যান পার্সেলটি নিয়ে</Line>
                <Line>আপনার লোকেশনে পৌঁছে আপনাকে</Line>
                <Line>কল করবে ও মেমো/ওটিপি কোড  চাইবে</Line>
                <Line>আপনি অফিস নাম্বারে যোগাযোগ</Line>
                <Line>করে আপনার ডিউ টাকাটি আমাদের</Line>
                <Line>কোম্পানির বিকাশ নাম্বারে ক্লিয়ার করে,</Line>
                <Line>আপনার মেমো কোডটি কালেক্ট করে</Line>
                <Line>ডেলিভারি ম্যানকে দিবেন ও পার্সেলটা বুঝে</Line>
                <Line>নিবেন</Line>
                <BlankLine />
                <Line emoji>
                  <Hands />
                  <PhoneLink href="#call">01<Mosaic rows={linkMosaic} cell={17} width={207} height={48} $drop={-7} $left={-23} $right={-14} />529</PhoneLink>
                  {'  '}<Check />এটা
                </Line>
                <Line>আমাদের অফিসিয়াল পারসোনাল বিকাশ</Line>
                <Line emoji>নাম্বার<Check /></Line>
              </Body>
              <LongTime>8:08 PM</LongTime>
            </LongBubble>

            <ShortBubble $sent $tail>
              <Tail sent />
              <Text><Run $latin>Ok</Run></Text>
              <Stamp><Time $sent>8:30 PM</Time><Ticks /></Stamp>
            </ShortBubble>

            <DayPill>Today</DayPill>

            <CallBubble $sent $tail>
              <Tail sent />
              <CallCard>
                <CallDisc>
                  <svg width="48" height="48" viewBox="0 0 48 48" color={c.muted}>
                    <MdCall size={60} x="-6" y="-6" />
                    <path d="M28 20L43 5M32 4h12v13" fill="none" stroke={c.muted} strokeWidth="5" strokeLinejoin="round" strokeLinecap="round" />
                  </svg>
                </CallDisc>
                <CallInfo>
                  <CallTitle>Voice call</CallTitle>
                  <CallLength>1 min</CallLength>
                  <CallTime $sent>11:11 AM</CallTime>
                </CallInfo>
              </CallCard>
            </CallBubble>
          </Messages>
          <ScrollDown type="button" aria-label="Scroll to latest">
            <svg width="36" height="40" viewBox="0 0 36 40" fill="none" stroke={c.muted} strokeWidth="5" strokeLinecap="round" strokeLinejoin="round">
              <path d="M4 4l14 14L32 4M4 22l14 14 14-14" />
            </svg>
          </ScrollDown>
        </Viewport>

        <Composer>
          <Field>
            <button type="button" aria-label="Stickers">
              <svg width="60" height="60" viewBox="0 0 60 60" fill="none" stroke={c.muted} strokeWidth="6" strokeLinejoin="round">
                <path d="M20 3h20q17 0 17 17v14L34 57H20Q3 57 3 40V20Q3 3 20 3z" />
                <path d="M33 57V46q0-11 11-12h13" strokeWidth="5" />
                <circle cx="20" cy="21" r="5" fill={c.muted} stroke="none" />
                <circle cx="40" cy="21" r="5" fill={c.muted} stroke="none" />
                <path d="M16 34h20q-5 4-6 10-11 0-14-10z" fill={c.muted} stroke="none" />
              </svg>
            </button>
            <MessageInput aria-label="Message" placeholder="Message" />
            <FieldButtons>
              <button type="button" aria-label="Attach">
                <svg width="40" height="60" viewBox="0 0 40 60" fill="none" stroke={c.muted} strokeWidth="5" strokeLinecap="round">
                  <path d="M37 15v25a17 17 0 0 1-34 0V15a12 12 0 0 1 24 0v24a7 7 0 0 1-14 0V15" />
                </svg>
              </button>
              <button type="button" aria-label="Camera"><MdOutlinePhotoCamera size={72} /></button>
            </FieldButtons>
          </Field>
          <MicButton type="button" aria-label="Voice message">
            <svg width="42" height="58" viewBox="0 0 42 58" fill="none" stroke="currentColor" strokeWidth="5" strokeLinecap="round">
              <rect x="12" y="0" width="18" height="37" rx="9" fill="currentColor" stroke="none" />
              <path d="M3 29a18 18 0 0 0 36 0M21 48v8" />
            </svg>
          </MicButton>
        </Composer>
      </Chat>

      <NavBar><HomePill type="button" aria-label="Home" /></NavBar>
    </Screen>
  );
}
